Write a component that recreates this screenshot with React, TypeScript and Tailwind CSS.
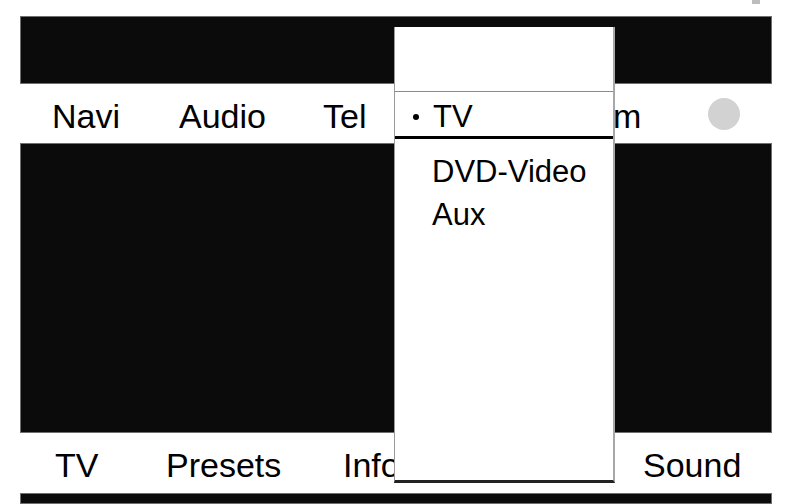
import React from "react";

const font = { fontFamily: '"Liberation Sans", Arial, sans-serif' };

export default function App() {
  return (
    <div className="relative w-[794px] h-[504px] bg-white overflow-hidden text-black" style={font}>
      <div className="absolute left-[752px] top-0 w-[8px] h-[4px] bg-[#bdbdbd]" />
      <div className="ml-[20px] w-[752px] pt-[16px]">
        <div className="h-[68px] bg-[#0b0b0b] border border-[#6f6f6f]" />
        <div className="h-[59px] flex items-center pl-[32px] text-[34px]">
          <span className="w-[127px] leading-[53px] pt-[6px]">Navi</span>
          <span className="w-[144px] leading-[53px] pt-[6px]">Audio</span>
          <span className="w-[205px] leading-[53px] pt-[6px]">Tel</span>
          <span className="w-[180px] leading-[53px] pt-[6px]">System</span>
          <span className="w-[32px] h-[32px] rounded-full bg-[#d2d2d2]" />
        </div>
        <div className="h-[290px] bg-[#0b0b0b] border border-[#6f6f6f]" />
        <div className="h-[60px] flex pl-[35px] text-[34px]">
          <span className="w-[111px] leading-[52px] pt-[6px]">TV</span>
          <span className="w-[177px] leading-[52px] pt-[6px]">Presets</span>
          <span className="w-[300px] leading-[52px] pt-[6px]">Info</span>
          <span className="leading-[52px] pt-[6px]">Sound</span>
        </div>
        <div className="h-[11px] bg-[#0b0b0b] border border-[#6f6f6f]" />
      </div>

      <div className="absolute left-[394px] top-[27px] w-[221px] h-[456px] bg-white border-l border-l-[#9a9a9a] border-r-2 border-r-[#a8a8a8] border-b-[3px] border-b-[#222] flex flex-col text-[31px]">
        <div className="h-[65px] border-b border-b-[#8a8a8a]" />
        <div className="h-[47px] border-b-[3px] border-b-black flex items-center">
          <span className="ml-[18px] mt-[6px] w-[6px] h-[6px] rounded-full bg-black" />
          <span className="ml-[14px] leading-[38px] pt-[5px]">TV</span>
        </div>
        <div className="pt-[11px] pl-[37px]">
          <div className="leading-[43px]">DVD-Video</div>
          <div className="leading-[43px]">Aux</div>
        </div>
      </div>
    </div>
  );
}
